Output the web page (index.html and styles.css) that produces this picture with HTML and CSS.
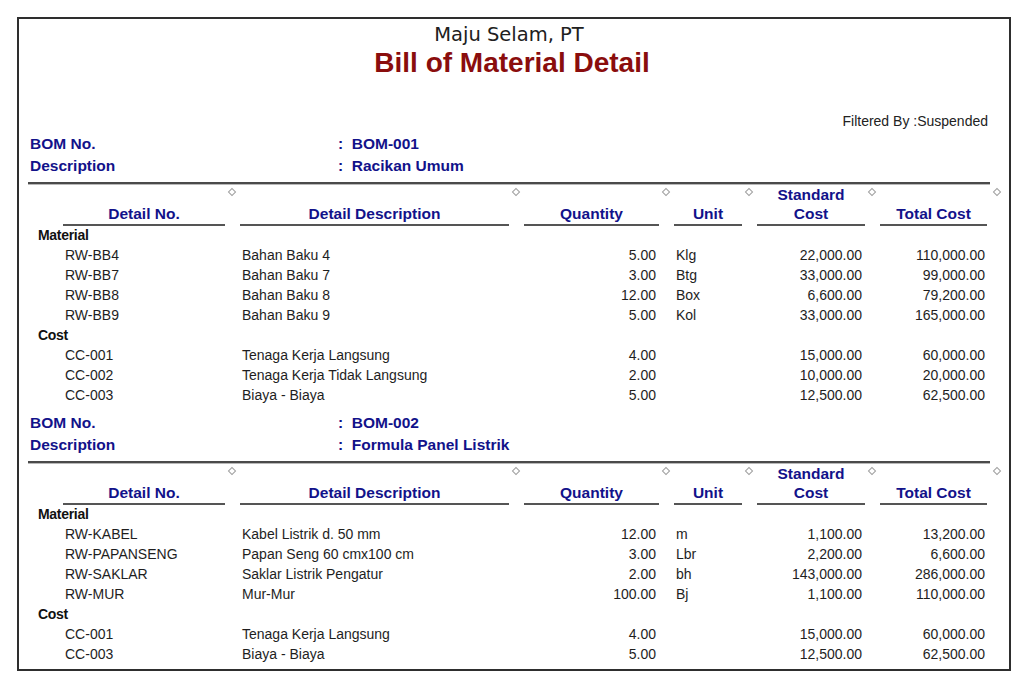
FILE: index.html
```html
<!DOCTYPE html>
<html>
<head>
<meta charset="utf-8">
<link rel="stylesheet" href="styles.css">
</head>
<body>
<div class="page">
  <div class="frame">
    <div class="company">Maju Selam, PT</div>
    <div class="title">Bill of Material Detail</div>
    <div class="filter">Filtered By :Suspended</div>

    <section class="bom">
      <div class="info"><span class="lbl">BOM No.</span><span class="val">:&nbsp; BOM-001</span></div>
      <div class="info"><span class="lbl">Description</span><span class="val">:&nbsp; Racikan Umum</span></div>
      <div class="rule"></div>
      <div class="row head">
        <div class="h">Detail No.<i class="dm"></i></div>
        <div class="h">Detail Description<i class="dm"></i></div>
        <div class="h">Quantity<i class="dm"></i></div>
        <div class="h">Unit<i class="dm"></i></div>
        <div class="h">Standard<br>Cost<i class="dm"></i></div>
        <div class="h">Total Cost<i class="dm last"></i></div>
      </div>
      <div class="cat">Material</div>
      <div class="row"><span class="t">RW-BB4</span><span class="t">Bahan Baku 4</span><span class="n">5.00</span><span class="t">Klg</span><span class="n">22,000.00</span><span class="n tot">110,000.00</span></div>
      <div class="row"><span class="t">RW-BB7</span><span class="t">Bahan Baku 7</span><span class="n">3.00</span><span class="t">Btg</span><span class="n">33,000.00</span><span class="n tot">99,000.00</span></div>
      <div class="row"><span class="t">RW-BB8</span><span class="t">Bahan Baku 8</span><span class="n">12.00</span><span class="t">Box</span><span class="n">6,600.00</span><span class="n tot">79,200.00</span></div>
      <div class="row"><span class="t">RW-BB9</span><span class="t">Bahan Baku 9</span><span class="n">5.00</span><span class="t">Kol</span><span class="n">33,000.00</span><span class="n tot">165,000.00</span></div>
      <div class="cat">Cost</div>
      <div class="row"><span class="t">CC-001</span><span class="t">Tenaga Kerja Langsung</span><span class="n">4.00</span><span class="t"></span><span class="n">15,000.00</span><span class="n tot">60,000.00</span></div>
      <div class="row"><span class="t">CC-002</span><span class="t">Tenaga Kerja Tidak Langsung</span><span class="n">2.00</span><span class="t"></span><span class="n">10,000.00</span><span class="n tot">20,000.00</span></div>
      <div class="row"><span class="t">CC-003</span><span class="t">Biaya - Biaya</span><span class="n">5.00</span><span class="t"></span><span class="n">12,500.00</span><span class="n tot">62,500.00</span></div>
    </section>

    <section class="bom">
      <div class="info"><span class="lbl">BOM No.</span><span class="val">:&nbsp; BOM-002</span></div>
      <div class="info"><span class="lbl">Description</span><span class="val">:&nbsp; Formula Panel Listrik</span></div>
      <div class="rule"></div>
      <div class="row head">
        <div class="h">Detail No.<i class="dm"></i></div>
        <div class="h">Detail Description<i class="dm"></i></div>
        <div class="h">Quantity<i class="dm"></i></div>
        <div class="h">Unit<i class="dm"></i></div>
        <div class="h">Standard<br>Cost<i class="dm"></i></div>
        <div class="h">Total Cost<i class="dm last"></i></div>
      </div>
      <div class="cat">Material</div>
      <div class="row"><span class="t">RW-KABEL</span><span class="t">Kabel Listrik d. 50 mm</span><span class="n">12.00</span><span class="t">m</span><span class="n">1,100.00</span><span class="n tot">13,200.00</span></div>
      <div class="row"><span class="t">RW-PAPANSENG</span><span class="t">Papan Seng 60 cmx100 cm</span><span class="n">3.00</span><span class="t">Lbr</span><span class="n">2,200.00</span><span class="n tot">6,600.00</span></div>
      <div class="row"><span class="t">RW-SAKLAR</span><span class="t">Saklar Listrik Pengatur</span><span class="n">2.00</span><span class="t">bh</span><span class="n">143,000.00</span><span class="n tot">286,000.00</span></div>
      <div class="row"><span class="t">RW-MUR</span><span class="t">Mur-Mur</span><span class="n">100.00</span><span class="t">Bj</span><span class="n">1,100.00</span><span class="n tot">110,000.00</span></div>
      <div class="cat">Cost</div>
      <div class="row"><span class="t">CC-001</span><span class="t">Tenaga Kerja Langsung</span><span class="n">4.00</span><span class="t"></span><span class="n">15,000.00</span><span class="n tot">60,000.00</span></div>
      <div class="row"><span class="t">CC-003</span><span class="t">Biaya - Biaya</span><span class="n">5.00</span><span class="t"></span><span class="n">12,500.00</span><span class="n tot">62,500.00</span></div>
    </section>
  </div>
</div>
</body>
</html>
```

FILE: styles.css
```css
html, body {
  margin: 0;
  padding: 0;
  background: #ffffff;
}
body {
  font-family: "Liberation Sans", Arial, sans-serif;
  color: #1e1e1e;
}
.page {
  padding: 17px 0 0 17px;
}
.frame {
  box-sizing: border-box;
  width: 994px;
  height: 654px;
  border: 2px solid #2e2e2e;
  padding: 4px 0 0 0;
  background: #fff;
}
.company {
  font-family: "DejaVu Sans", Verdana, sans-serif;
  font-size: 19.5px;
  line-height: 24px;
  text-align: center;
  color: #202020;
  padding-right: 10px;
}
.title {
  font-size: 28px;
  font-weight: bold;
  line-height: 32px;
  text-align: center;
  color: #8a0d0d;
  padding-right: 4px;
}
.filter {
  margin-top: 33px;
  font-size: 14px;
  line-height: 18px;
  text-align: right;
  padding-right: 21px;
  color: #222;
}
.bom {
  margin-top: 3px;
}
.bom + .bom {
  margin-top: 7px;
}
.info {
  display: flex;
  padding-left: 11px;
  height: 22px;
  line-height: 22px;
  font-size: 15.5px;
  font-weight: bold;
  color: #12128a;
}
.lbl {
  width: 308px;
}
.rule {
  margin: 5px 0 0 9px;
  width: 962px;
  height: 0;
  border-top: 2px solid #4a4a4a;
  border-bottom: 1px solid #b8b8b8;
}
.row {
  display: grid;
  grid-template-columns: 162px 269px 135px 68px 108px 107px;
  column-gap: 15px;
  margin-left: 44px;
  height: 20px;
  line-height: 20px;
  font-size: 14px;
}
.row.head {
  height: 40px;
  line-height: 19px;
}
.h {
  position: relative;
  display: flex;
  align-items: flex-end;
  justify-content: center;
  text-align: center;
  font-size: 15.5px;
  font-weight: bold;
  color: #12128a;
  border-bottom: 2px solid #555;
  padding-bottom: 1px;
}
.dm {
  position: absolute;
  top: 4px;
  right: -10px;
  width: 4px;
  height: 4px;
  border: 1px solid #a0a0a0;
  transform: rotate(45deg);
}
.dm.last {
  right: -13px;
}
.t {
  padding-left: 2px;
  white-space: nowrap;
}
.n {
  text-align: right;
  padding-right: 3px;
}
.n.tot {
  padding-right: 2px;
}
.cat {
  margin-left: 19px;
  height: 20px;
  line-height: 20px;
  font-size: 14px;
  font-weight: bold;
  color: #111;
  letter-spacing: -0.3px;
}
```
